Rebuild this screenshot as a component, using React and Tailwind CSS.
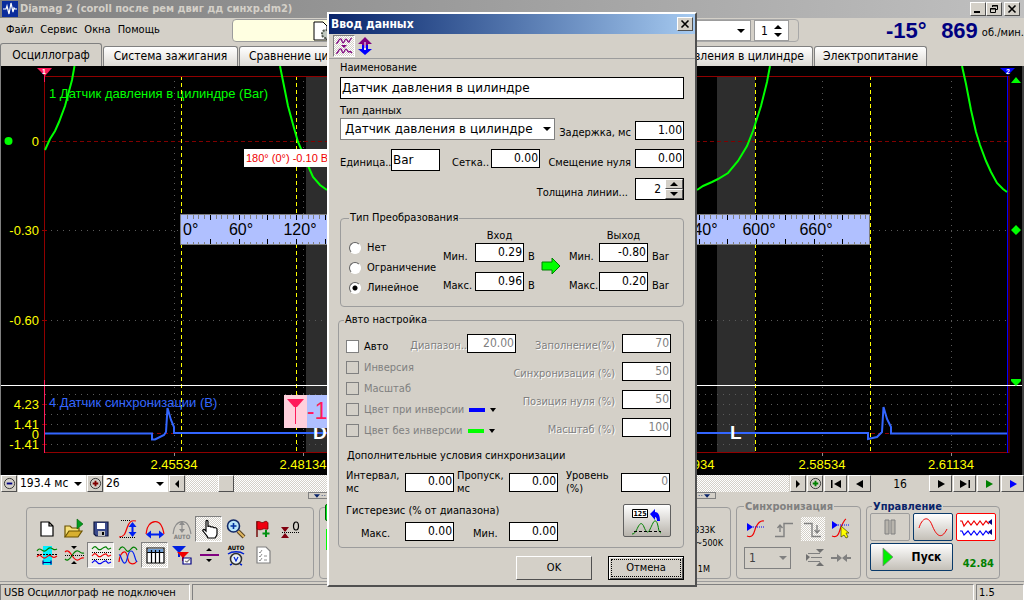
import React from "react";

const raised =
  "border border-t-white border-l-white border-r-[#505050] border-b-[#505050] bg-[#d4d0c8]";
const hatch =
  "bg-[repeating-conic-gradient(#ffffff_0_25%,#d4d0c8_0_50%)] bg-[length:2px_2px]";
const group = "rounded-[4px] border border-[#9c9c9c]";

function Icon({ children, className = "h-6 w-6" }) {
  return (
    <svg viewBox="0 0 24 24" className={className} fill="none" strokeWidth="1.2" aria-hidden="true">
      {children}
    </svg>
  );
}

const tools = [
  {
    name: "Новый",
    icon: <path d="M6 5h8l4 4v10H6zM14 5v4h4" fill="#fff" stroke="#000" />,
  },
  {
    name: "Открыть",
    icon: (
      <>
        <path d="M3 20V9h5l2 2h7v3" fill="#f6e07a" stroke="#6b5300" />
        <path d="M3 20l4-6h13l-4 6z" fill="#d8b030" stroke="#6b5300" />
        <path d="M15 2v10l6-5z" fill="#009a20" stroke="#006000" strokeWidth="0.6" />
      </>
    ),
  },
  {
    name: "Сохранить",
    icon: (
      <>
        <path d="M5 5h14v14H7l-2-2z" fill="#3a4a8c" stroke="#101840" />
        <path d="M8 6h8v6H8z" fill="#fff" />
        <path d="M9 14h7v5H9z" fill="#c0c0c0" />
        <path d="M13 15h2v3h-2z" fill="#000" />
      </>
    ),
  },
  {
    name: "Масштаб по вертикали",
    icon: (
      <>
        <path d="M3 20c5 0 6-3 8-9s4-8 9-7" stroke="#f00000" />
        <path d="M5 3.500h9M4 20.500h15" stroke="#000" strokeDasharray="1 1" />
        <path d="M16.500 8v9" stroke="#0020f0" strokeWidth="2" />
        <path d="M16.500 5l4 5h-8zM16.500 20l4-5h-8z" fill="#0020f0" />
      </>
    ),
  },
  {
    name: "Масштаб по горизонтали",
    icon: (
      <>
        <path d="M3 17c1-3 0-5 3-9s9-5 12 0 2 6 3 9" stroke="#f00000" />
        <path d="M6 17.500h12" stroke="#0020f0" strokeWidth="2" />
        <path d="M3 17.500l5-4v8zM21 17.500l-5-4v8z" fill="#0020f0" />
      </>
    ),
  },
  {
    name: "Автомасштаб",
    icon: (
      <>
        <path d="M3 17c1-3 0-5 3-9s9-5 12 0 2 6 3 9M12 7v7" stroke="#8c8c8c" />
        <path d="M12 4l3 4H9zM12 16l3-4H9z" fill="#8c8c8c" />
        <text x="12" y="22" textAnchor="middle" fontSize="6" fontWeight="bold" fill="#808080">AUTO</text>
      </>
    ),
  },
  {
    name: "Рука",
    pressed: true,
    icon: (
      <path
        d="M9 14V4.500c0-1.500 2-1.500 2 0V10c0-1.300 3-1.300 3 .5 0-1 3-1 3 .8 0-1 3-.8 3 1V17c0 2-1 2-2 4h-7c-1-3-3-4-5-7-1-1 1-2.200 2-1z"
        fill="#fff"
        stroke="#000"
      />
    ),
  },
  {
    name: "Лупа",
    icon: (
      <>
        <path d="M14 14l6 6" stroke="#5a4320" strokeWidth="4" />
        <path d="M14 14l6 6" stroke="#e0b860" strokeWidth="2" />
        <circle cx="9.500" cy="9" r="6" fill="#b8e4f8" stroke="#102868" strokeWidth="1.600" />
        <path d="M9.500 6v6M6.500 9h6" stroke="#0030a0" strokeWidth="1.600" />
      </>
    ),
  },
  {
    name: "Добавить маркер",
    icon: (
      <>
        <path d="M6 20V4" stroke="#700000" strokeWidth="1.400" />
        <path d="M6 5c3-2 4 2 7 0s4 1 4 1v6c-3 1-3-1-5 0s-4 1-6 0z" fill="#f00010" stroke="#700000" strokeWidth="0.800" />
        <path d="M15 13v7M11.500 16.500h7" stroke="#009010" strokeWidth="2" />
      </>
    ),
  },
  {
    name: "Нулевой уровень",
    icon: (
      <>
        <path d="M3 10h8l-4 5zM3 21h8l-4-5z" fill="#800010" />
        <path d="M4 15.500h18" stroke="#000" strokeDasharray="1 1" />
        <ellipse cx="18" cy="9" rx="2.500" ry="4" stroke="#000" />
      </>
    ),
  },
  {
    name: "Выделение",
    icon: (
      <>
        <path d="M8 3h9v19H8z" fill="#00f0ff" />
        <path d="M2 8c3-5 5 1 8 0s3-4 6-3 3 3 6 1" stroke="#008000" />
        <path d="M2 11.500h20" stroke="#000" strokeDasharray="2 1" />
        <path d="M2 14c3-5 5 2 8 1s3-4 6-2 3 2 6 0" stroke="#f00000" />
        <path d="M8 19.500h8M8 17.500v4M16 17.500v4" stroke="#000080" />
      </>
    ),
  },
  {
    name: "Пересечение",
    icon: (
      <>
        <path d="M9 3h6l-3 3zM9 21h6l-3-3z" fill="#000" />
        <path d="M3 9c2-2 4-1 6 2s4 7 7 6 3-3 6-2" stroke="#f00000" />
        <path d="M3 16c2 2 4 1 6-2s4-7 7-6 3 3 6 2" stroke="#008000" />
        <path d="M3 12.500h19" stroke="#000" strokeDasharray="1 1" />
      </>
    ),
  },
  {
    name: "Раздельно",
    active: true,
    icon: (
      <>
        <path d="M3 6c3-4 4-2 6 0s3 0 5-1 3-2 4 0 2 1 4 0" stroke="#008000" />
        <path d="M3 13c3-4 4-2 6 0s3 0 5-1 3-2 4 0 2 1 4 0" stroke="#f00000" />
        <path d="M3 20c3-4 4-2 6 0s3 0 5-1 3-2 4 0 2 1 4 0" stroke="#0000f0" />
        <path d="M3 9.500h19M3 16.500h19" stroke="#000" strokeDasharray="1 1" />
      </>
    ),
  },
  {
    name: "Наложение",
    icon: (
      <>
        <path d="M3 7c3-5 5-3 7 0s4 0 6-2 4 0 5 2" stroke="#008000" />
        <path d="M3 19c0-5 3-11 6-10s2 9 5 11 5 1 7-2" stroke="#f00000" />
        <path d="M3 12c2-1 3 9 6 8s2-12 6-12 3 8 6 11" stroke="#0020f0" />
      </>
    ),
  },
  {
    name: "Таблица",
    pressed: true,
    icon: (
      <>
        <path d="M4 5h17v15H4z" fill="#fff" stroke="#000" />
        <path d="M5 6h15v3H5z" fill="#70a0d8" />
        <path d="M4 9.500h17M8.500 7v13M12.500 7v13M16.500 7v13" stroke="#000" />
      </>
    ),
  },
  {
    name: "Список маркеров",
    icon: (
      <>
        <path d="M2 3h14l-6 6v5H8V9z" fill="#0020e0" />
        <path d="M7 9h12l-5 5v4h-2v-4z" fill="#f00000" />
        <path d="M13 15h8v6h-8z" fill="#fff" stroke="#000080" />
        <path d="M15 18l2 1 3-3" stroke="#808080" />
      </>
    ),
  },
  {
    name: "Линия",
    icon: (
      <>
        <path d="M3 12h19" stroke="#800080" strokeWidth="2" />
        <path d="M12 5l3 3H9zM12 19l3-3H9z" fill="#000" />
      </>
    ),
  },
  {
    name: "Автозапуск",
    icon: (
      <>
        <text x="12" y="7" textAnchor="middle" fontSize="6" fontWeight="bold" fill="#000">AUTO</text>
        <path d="M4 11c4-3 12-3 16 0M8 21l-2 1M16 21l2 1" stroke="#0020d0" strokeWidth="1.500" />
        <circle cx="12" cy="16" r="5.500" fill="#e8f0f4" stroke="#303030" strokeWidth="1.500" />
        <path d="M10 14l2 4 2-4" stroke="#0020d0" />
      </>
    ),
  },
  {
    name: "Отчёт",
    icon: (
      <>
        <path d="M6 4h9l4 4v12H6z" fill="#fff" stroke="#808080" />
        <path d="M8 9l1 1 2-3M8 13l1 1 2-3M8 17l1 1 2-3M13 13h3M13 17h3" stroke="#909090" strokeWidth="1" />
      </>
    ),
  },
];

function ToolButton({ tool }) {
  const look = tool.pressed
    ? `border border-t-[#808080] border-l-[#808080] border-r-white border-b-white ${hatch}`
    : tool.active
      ? "border border-t-[#808080] border-l-[#808080] border-r-white border-b-white bg-[#efedea]"
      : "";
  return (
    <button aria-label={tool.name} className={`flex h-[26px] w-[27px] items-center justify-center ${look}`}>
      <Icon>{tool.icon}</Icon>
    </button>
  );
}

function TitleBar() {
  return (
    <header className="flex h-[18px] items-center bg-linear-to-r from-[#808080] to-[#c0c0c0] pr-1 pl-[2px]">
      <svg viewBox="0 0 16 16" className="h-4 w-4" aria-hidden="true">
        <path d="M0 0h16v16H0z" fill="#0a2c9c" />
        <path d="M1 8h3l1-3 2 8 2-11 2 9 1-4 1 1h2" fill="none" stroke="#fff" strokeWidth="1.200" />
      </svg>
      <h1 className="ml-[2px] flex-1 text-[11px] leading-4 font-bold text-[#d4d0c8]">
        Diamag 2 (coroll после рем двиг дд синхр.dm2)
      </h1>
      <div className="flex">
        <button aria-label="Свернуть" className={`flex h-[14px] w-4 items-center justify-center ${raised}`}>
          <svg viewBox="0 0 10 10" className="h-[10px] w-[10px]"><path d="M1 7h6v2H1z" /></svg>
        </button>
        <button aria-label="Восстановить" className={`flex h-[14px] w-4 items-center justify-center ${raised}`}>
          <svg viewBox="0 0 10 10" className="h-[10px] w-[10px]" fill="none" stroke="#000">
            <path d="M3.500 3V1.500h5v4H7M3 2h6M1.500 4.500h5v4h-5zM1 5h6" />
          </svg>
        </button>
        <button aria-label="Закрыть" className={`ml-[2px] flex h-[14px] w-4 items-center justify-center ${raised}`}>
          <svg viewBox="0 0 10 10" className="h-[10px] w-[10px]" stroke="#000" strokeWidth="1.600"><path d="M1.500 1.500l7 7M8.500 1.500l-7 7" /></svg>
        </button>
      </div>
    </header>
  );
}

function MenuBar() {
  return (
    <div className="flex h-[25px] items-center">
      <nav className="flex w-[232px] gap-[7px] pl-[6px] text-[11px]">
        <a href="#file">Файл</a>
        <a href="#service">Сервис</a>
        <a href="#windows">Окна</a>
        <a href="#help">Помощь</a>
      </nav>
      <div className="flex h-[23px] w-[200px] items-center rounded-[4px] border border-[#9c9c9c] bg-[#ffffe1] pl-20">
        <svg viewBox="0 0 18 20" className="h-5 w-[18px]" aria-hidden="true">
          <path d="M1 1h9l4 4v14H1z" fill="#fff" stroke="#000" />
          <circle cx="13" cy="13" r="4" fill="#c0c8c0" stroke="#505850" strokeWidth="2" strokeDasharray="2 1" />
        </svg>
      </div>
      <div className="ml-auto flex h-[23px] w-[230px] items-center justify-end gap-[3px] rounded-[4px] border border-[#a8a8a8] pr-[9px]">
        <div className="flex h-[21px] w-36 items-center justify-end border border-[#9c9c9c] bg-white pr-[5px]">
          <svg viewBox="0 0 8 4" className="h-1 w-2" aria-hidden="true"><path d="M0 0h8L4 4z" /></svg>
        </div>
        <div className="flex h-[21px] w-[35px] items-center justify-between border border-[#9c9c9c] bg-white px-[6px] text-[12px]">
          <span>1</span>
          <svg viewBox="0 0 8 14" className="h-[14px] w-2" aria-hidden="true"><path d="M0 5h8L4 1zM0 9h8l-4 4z" /></svg>
        </div>
      </div>
      <div className="ml-[87px] flex w-[138px] items-center font-['Liberation_Sans',sans-serif] text-[22px] leading-6 font-bold text-[#000080]">
        <span>-15°</span>
        <span className="ml-auto">869</span>
        <span className="ml-1 pt-1 font-['DejaVu_Sans_Condensed','DejaVu_Sans',sans-serif] text-[11px] leading-4 font-normal text-black">об./мин.</span>
      </div>
    </div>
  );
}

function Tabs() {
  const tab =
    "h-5 shrink-0 overflow-hidden rounded-t-[3px] border border-b-0 border-[#808080] bg-linear-to-b from-white to-[#dedbd5] whitespace-nowrap";
  return (
    <div role="tablist" className="flex h-[23px] items-end gap-px text-[12px] leading-[19px]">
      <button role="tab" aria-selected="true" className="h-[23px] w-[102px] rounded-t-[3px] border border-b-0 border-[#808080] bg-[#d4d0c8] leading-[21px]">
        Осциллограф
      </button>
      <button role="tab" className={`${tab} w-[135px]`}>Система зажигания</button>
      <button role="tab" className={`${tab} w-[333px] pl-[9px] text-left`}>Сравнение цилиндров</button>
      <button role="tab" className={`${tab} w-[240px] pr-2 text-right`}>Осциллограмма давления в цилиндре</button>
      <button role="tab" className={`${tab} w-[113px]`}>Электропитание</button>
    </div>
  );
}

const rulerMarks = Array.from({ length: 119 }, (_, i) => i + 1);

function Chart() {
  return (
    <svg viewBox="0 66 1024 409" className="block h-auto w-full font-['Liberation_Sans',sans-serif]" fill="none">
      <path d="M0 66h1024v409H0z" fill="#000" />
      <path d="M306 77h44v375h-44zM717 77h38v375h-38z" fill="#2d2d2d" />

      {/* grid */}
      <g stroke="#5a5a5a" strokeDasharray="1 5">
        <path d="M174.500 81V452M303.500 81V452M822.500 81V452M951.500 81V452" />
        <path d="M45 230.500H1007M45 320.500H1007" />
        <path d="M45 394.500H1007M45 404.500H1007M45 414.500H1007M45 424.500H1007M45 444.500H1007" />
      </g>
      <path d="M45 141.500H1007" stroke="#800000" strokeDasharray="4 3" />
      <path d="M181.500 76V452M296.500 76V452M755.500 76V452M870.500 76V452" stroke="#ffff00" strokeDasharray="4 3" />
      <path d="M44.500 76.500H1009M44 452.500H1009M1009 76V453M44.500 76V385M42 141.500h5M42 230.500h5M42 320.500h5M42 404.500h5M42 424.500h5M42 444.500h5" stroke="#900000" />
      <path d="M44.500 68v14M44.500 380v73" stroke="#ff1a5a" />
      <path d="M174.500 453v3M303.500 453v3M822.500 453v3M951.500 453v3" stroke="#909090" />
      <path d="M1007.500 76V453" stroke="#0000ff" />
      <path d="M0 385.500H1022" stroke="#fff" />

      {/* pressure trace */}
      <g stroke="#00ff00" strokeWidth="2">
        <path d="M74.500 66L72 80L65 106L59 122L55 131L50 139L45 150" />
        <path d="M280 66L284 86L288 106L294 128L298 142L302 151L309 168L313 177L320 185L327 190" />
        <path d="M697 190L703 186L712 182L718 179L728 173L738 161L747 146L753 131L761 106L767 82L770 66" />
        <path d="M962 66L966 84L971 110L976 132L980 145L986 161L991 172L997 183L1003 189L1007 192" />
      </g>

      {/* sync trace */}
      <path d="M45 433.500H1007" stroke="#900000" strokeDasharray="4 3" />
      <path
        d="M45 433.500H152V439.500H155L164 435L166 432L167.500 408L171 420L174 427V433H868V439L877 437L882 432L883.500 407L887 419L891 427V433.500H1007"
        stroke="#3366ff"
        strokeWidth="2"
      />

      <g fill="#fff" fontSize="19" fontWeight="bold">
        <text x="313" y="439">D</text>
        <text x="730" y="439">L</text>
      </g>

      {/* angle ruler */}
      <path d="M180.500 214.500H869.500V244.500H180.500z" fill="#b0c0ff" stroke="#808080" />
      {rulerMarks.map((i) => {
        const x = Math.round(181 + i * 5.75) + 0.5;
        const major = i % 5 === 0;
        return (
          <path
            key={i}
            d={major ? `M${x} 215v5M${x} 239v5` : `M${x} 215v4M${x} 242v2`}
            stroke={major ? "#000" : "#808080"}
          />
        );
      })}
      <g fill="#000" fontSize="16">
        <text x="183" y="235">0°</text>
        <text x="241" y="235" textAnchor="middle">60°</text>
        <text x="300" y="235" textAnchor="middle">120°</text>
        <text x="701" y="235" textAnchor="middle">540°</text>
        <text x="759" y="235" textAnchor="middle">600°</text>
        <text x="816" y="235" textAnchor="middle">660°</text>
      </g>

      <path d="M244 149h90v18h-90z" fill="#fff" />
      <text x="246" y="162" fontSize="11" fill="#f00000">180° (0°) -0.10 B</text>

      <path d="M284 395h23v33h-23z" fill="#ffd0dc" />
      <path d="M307 395h40v33h-40z" fill="#b0c0ff" />
      <path d="M287 399h17l-7 8h-3z" fill="#ff1a5a" />
      <path d="M295.500 405v19" stroke="#ff1a5a" />
      <text x="307" y="419" fontSize="23" fill="#ff1a5a">-1</text>

      <g fill="#ffff00" fontSize="13">
        <g textAnchor="end">
          <text x="39" y="146">0</text>
          <text x="39" y="235">-0.30</text>
          <text x="39" y="325">-0.60</text>
          <text x="39" y="409">4.23</text>
          <text x="39" y="429">1.41</text>
          <text x="39" y="439">0</text>
          <text x="39" y="449">-1.41</text>
        </g>
        <g textAnchor="middle">
          <text x="174" y="469">2.45534</text>
          <text x="303" y="469">2.48134</text>
          <text x="691" y="469">2.55934</text>
          <text x="822" y="469">2.58534</text>
          <text x="951" y="469">2.61134</text>
        </g>
      </g>
      <text x="49" y="98" fontSize="13" fill="#00ff00">1 Датчик давления в цилиндре (Bar)</text>
      <text x="49" y="407" fontSize="13" fill="#3366ff">4 Датчик синхронизации (В)</text>

      {/* markers */}
      <path d="M37 68h15l-7 8z" fill="#ff1a5a" />
      <path d="M1000 68h15l-7 7z" fill="#0000ff" />
      <g fill="#fff" fontSize="7" fontWeight="bold">
        <text x="42" y="74">1</text>
        <text x="1006" y="74">2</text>
      </g>
      <circle cx="8.500" cy="141" r="4" fill="#00ff00" />
      <path d="M1011 83h10l-5-6zM1016 225l5 5-5 5-5-5zM1011 379h10v2l-5 5-5-5z" fill="#00ff00" />
      <path d="M0.500 66V475M1023 66V475" stroke="#808080" />
    </svg>
  );
}

function ZoomSign({ color, plus, label }) {
  return (
    <button aria-label={label} className={`flex h-[17px] w-4 shrink-0 items-center justify-center ${raised}`}>
      <svg viewBox="0 0 14 14" className="h-[13px] w-[13px]" fill="none">
        <circle cx="7" cy="7" r="5.500" stroke="#303030" />
        <path d={plus ? "M4 7h6M7 4v6" : "M4 7h6"} stroke={color} strokeWidth="2" />
      </svg>
    </button>
  );
}

function NavButton({ label, d, color = "#000", wide = true }) {
  return (
    <button
      aria-label={label}
      className={`flex h-[17px] shrink-0 items-center justify-center ${raised} ${wide ? "w-[23px]" : "w-4"}`}
    >
      <svg viewBox="0 0 12 10" className="h-[10px] w-3" fill={color}>
        <path d={d} />
      </svg>
    </button>
  );
}

function Arrow({ gray }) {
  return (
    <svg viewBox="0 0 8 4" className="pointer-events-none absolute top-1/2 right-1 h-1 w-2 -translate-y-1/2" aria-hidden="true">
      <path d="M0 0h8L4 4z" fill={gray ? "#808080" : "#000"} />
    </svg>
  );
}

function ScrollRow() {
  const select = "block h-[17px] w-full appearance-none bg-white text-[12px] leading-[17px]";
  return (
    <div className="flex h-[17px] items-center gap-px pl-px">
      <ZoomSign label="Уменьшить" color="#000080" />
      <label className="relative w-[68px]">
        <select aria-label="Длительность" className={`${select} pl-[2px]`}>
          <option>193.4 мс</option>
        </select>
        <Arrow />
      </label>
      <ZoomSign label="Увеличить" color="#800000" plus />
      <label className="relative w-16">
        <select aria-label="Деление" className={`${select} pl-[2px]`}>
          <option>26</option>
        </select>
        <Arrow />
      </label>
      <NavButton label="Прокрутка влево" wide={false} d="M8 1v8L4 5z" />
      <div className={`flex h-[17px] flex-1 ${hatch}`}>
        <div className={`ml-8 h-[17px] w-4 ${raised}`} />
      </div>
      <NavButton label="Прокрутка вправо" wide={false} d="M4 1v8l4-4z" />
      <ZoomSign label="Приблизить" color="#008000" plus />
      <NavButton label="В начало" d="M1 1h1.500v8H1zM11 1v8L4 5z" />
      <NavButton label="Назад" d="M9 1v8L2 5z" />
      <output className="w-[56px] text-center text-[12px]">16</output>
      <NavButton label="Вперёд" d="M3 1v8l7-4z" />
      <NavButton label="В конец" d="M1 1v8l7-4zM9.500 1H11v8H9.500z" />
      <NavButton label="Пуск" d="M3 1v8l7-4z" color="#008000" />
      <NavButton label="Пуск вперёд" d="M3 1v8l7-4z" color="#0000ff" />
    </div>
  );
}

function Splitter() {
  return (
    <div className="mx-[308px] flex h-2 justify-between">
      {["left", "right"].map((side) => (
        <div key={side} className="flex h-[7px] w-6 items-center border border-[#808080] px-1">
          <svg viewBox="0 0 16 4" className={side === "left" ? "h-1 w-4" : "h-1 w-4 -scale-x-100"} aria-hidden="true">
            <path d="M1 0h7L4.500 4zM10 1h1v1h-1zM13 1h1v1h-1z" fill="#0a246a" />
          </svg>
        </div>
      ))}
    </div>
  );
}

function SyncPanel() {
  return (
    <fieldset className={`${group} -mt-[7px] h-[79px] w-[125px] shrink-0 px-[7px]`}>
      <legend className="h-[13px] px-px text-[11px] leading-[13px] font-bold text-[#808080]">Синхронизация</legend>
      <div className="grid grid-cols-4 gap-x-[4px] pt-1">
        <button aria-label="Уровень">
          <Icon>
            <path d="M3 19c7 3 7-5 9-9s4-7 8-6" stroke="#f00000" />
            <path d="M3 6l6 4-6 4z" fill="#0000ff" />
            <path d="M9 10h11" stroke="#0000ff" strokeDasharray="1 1" />
          </Icon>
        </button>
        <button aria-label="Фронт">
          <Icon><path d="M3 19.500h9V6.500h9M8 9v6M5.500 11L8 8l2.500 3" stroke="#808080" strokeWidth="1.400" /></Icon>
        </button>
        <button aria-label="Спад" className={hatch}>
          <Icon><path d="M3 6.500h8v13h9M16 8v8M13.500 13L16 16l2.500-3" stroke="#808080" strokeWidth="1.400" /></Icon>
        </button>
        <button aria-label="Ручная">
          <Icon>
            <path d="M3 19c7 3 7-5 9-9s3-7 5-8" stroke="#f00000" />
            <path d="M3 4l6 4-6 4z" fill="#0000ff" />
            <path d="M9 8h12" stroke="#0000ff" strokeDasharray="1 1" />
            <path d="M12 9v11l3-2 2 3 2-1-2-4h3z" fill="#ffff00" stroke="#404000" strokeWidth="0.700" />
          </Icon>
        </button>
      </div>
      <div className="flex items-center pt-[5px]">
        <label className="relative w-[47px]">
          <select aria-label="Канал" disabled className="block h-[22px] w-full appearance-none border border-[#808080] pl-1 text-[12px] text-[#404040]">
            <option>1</option>
          </select>
          <Arrow gray />
        </label>
        <button aria-label="Гистерезис" className="ml-3">
          <Icon>
            <path d="M3 8l4 3-4 4zM13 3h8l-4 4zM13 20h8l-4-4z" fill="#707070" />
            <path d="M5 7.500h12M8 11.500h11M5 15.500h12" stroke="#808080" />
          </Icon>
        </button>
        <button aria-label="Сжать" className="ml-[2px]">
          <Icon>
            <path d="M2 11h6V8l5 4-5 4v-3H2zM22 11h-4V8l-5 4 5 4v-3h4z" fill="#808080" />
          </Icon>
        </button>
      </div>
    </fieldset>
  );
}

function ControlPanel() {
  const btn = "flex items-center justify-center rounded-[2px] border bg-linear-to-b from-white to-[#c4c0b8]";
  return (
    <fieldset className={`${group} -mt-[7px] h-[79px] w-[134px] shrink-0 px-[3px]`}>
      <legend className="ml-[2px] h-[13px] px-px text-[11px] leading-[13px] font-bold text-[#0a246a]">Управление</legend>
      <div className="flex justify-between">
        <button aria-label="Пауза" className="flex h-7 w-10 items-center justify-center rounded-[2px] border border-[#9c9c9c]">
          <svg viewBox="0 0 12 16" className="h-4 w-3" fill="#b8b4ac" stroke="#808080"><path d="M1 1h4v14H1zM7 1h4v14H7z" /></svg>
        </button>
        <button aria-label="Синус" className={`${btn} h-7 w-10 border-[#0a3a6a]`}>
          <svg viewBox="0 0 30 20" className="h-5 w-[30px]" fill="none" stroke="#f00000"><path d="M1 11C4 1 10-2 14 8s9 16 15 4" /></svg>
        </button>
        <button aria-label="Непрерывно" className="flex h-7 w-10 items-center justify-center rounded-[2px] border border-[#ff0000] bg-white">
          <svg viewBox="0 0 34 20" className="h-5 w-[34px]" fill="none" strokeWidth="1.200">
            <path d="M1 4h2l2 5 4-5 3 4 3-4 3 4 3-4 3 4 3-4 3 3" stroke="#f00000" />
            <path d="M1 14h2l2 4 4-4 3 4 3-4 3 4 3-4 3 4 3-4 3 3" stroke="#0000ff" />
            <path d="M33 2v6l-4-3zM33 12v6l-4-3z" fill="#000080" />
          </svg>
        </button>
      </div>
      <div className="flex items-end justify-between pt-[2px]">
        <button className={`${btn} h-7 w-[83px] gap-[18px] border-[#0a3a6a] text-[12px] font-bold`}>
          <svg viewBox="0 0 12 20" className="h-5 w-3" aria-hidden="true"><path d="M1 1v18l10-9z" fill="#00f000" stroke="#808080" strokeWidth="0.800" /></svg>
          Пуск
        </button>
        <output className="pr-[2px] text-[11px] leading-[14px] font-bold text-[#008000]">42.84</output>
      </div>
    </fieldset>
  );
}

function BottomPanels() {
  return (
    <div className="flex gap-[5px] border-b border-[#9c9c9c] pt-[7px] pr-6 pb-[2px] pl-[26px]">
      <div className={`${group} h-[72px] w-[288px] shrink-0 pt-2 pl-[6px]`}>
        <div className="flex">{tools.slice(0, 10).map((t) => <ToolButton key={t.name} tool={t} />)}</div>
        <div className="flex">{tools.slice(10).map((t) => <ToolButton key={t.name} tool={t} />)}</div>
      </div>
      <div className={`${group} flex h-[72px] flex-1 justify-between pr-[7px] pl-[5px]`}>
        <div>
          <div className="-mt-1 h-[17px] w-4 rounded-[2px] border border-[#006000] bg-[#00e820]" />
          <div className="mt-2 ml-px h-[21px] w-px bg-[#00ff00]" />
        </div>
        <div className="flex flex-col items-end pt-4 text-[9px] leading-[13px]">
          <span className="pr-2">333K</span>
          <span>~500K</span>
          <span className="pt-[13px] pr-[13px]">1M</span>
        </div>
      </div>
      <SyncPanel />
      <ControlPanel />
    </div>
  );
}

function StatusBar() {
  const cell = "h-[17px] border border-t-[#808080] border-l-[#808080] border-r-white border-b-white";
  return (
    <footer className="flex gap-[2px] pt-[2px] text-[11px] leading-[15px]">
      <div className={`${cell} w-[190px] pl-[3px]`}>USB Осциллограф не подключен</div>
      <div className={`${cell} flex-1`} />
      <div className={`${cell} w-12 pl-[2px]`}>1.5</div>
    </footer>
  );
}

function Num({ id, value, disabled, label }) {
  return (
    <input
      id={id}
      aria-label={label}
      defaultValue={value}
      disabled={disabled}
      className="h-[19px] w-[49px] shrink-0 border border-black bg-white pr-px pb-[2px] text-right text-[12px] disabled:text-[#808080]"
    />
  );
}

function Check({ id, label, disabled, color }) {
  return (
    <div className="flex h-[21px] items-center gap-[5px]">
      <input
        id={id}
        type="checkbox"
        disabled={disabled}
        className="h-[13px] w-[13px] shrink-0 appearance-none border border-[#808080] bg-white disabled:bg-transparent"
      />
      <label htmlFor={id} className={`whitespace-nowrap ${disabled ? "text-[#808080]" : ""}`}>{label}</label>
      {color && (
        <button type="button" aria-label={`${label}: выбор`}>
          <svg viewBox="0 0 28 6" className="h-[6px] w-7">
            <path d="M0 1h16v4H0z" fill={color} />
            <path d="M21 1h6l-3 4z" fill="#000" />
          </svg>
        </button>
      )}
    </div>
  );
}

function ConversionGroup() {
  return (
    <fieldset className={`${group} mt-[11px] h-[96px] px-2`}>
      <legend className="h-[14px] px-px leading-[14px]">Тип Преобразования</legend>
      <div className="flex items-start">
        <div className="flex w-[94px] flex-col pt-[13px]">
          {["Нет", "Ограничение", "Линейное"].map((name) => (
            <label key={name} className="flex h-5 items-center gap-[6px]">
              <input
                type="radio"
                name="conversion"
                defaultChecked={name === "Линейное"}
                className="h-3 w-3 shrink-0 appearance-none rounded-full border border-t-[#606060] border-r-white border-b-white border-l-[#606060] bg-white checked:bg-[radial-gradient(circle,#000_2px,#fff_3px)]"
              />
              {name}
            </label>
          ))}
        </div>
        <div className="grid grid-cols-[32px_49px_17px] grid-rows-[14px_29px_29px] items-start pt-1">
          <span className="col-start-2 text-center">Вход</span>
          <label htmlFor="in-min" className="col-start-1 pt-[7px]">Мин.</label>
          <Num id="in-min" value="0.29" />
          <span className="pt-[7px] pl-1">В</span>
          <label htmlFor="in-max" className="pt-[7px]">Макс.</label>
          <Num id="in-max" value="0.96" />
          <span className="pt-[7px] pl-1">В</span>
        </div>
        <svg viewBox="0 0 20 18" className="mt-8 h-[18px] w-5" aria-hidden="true">
          <path d="M1 5h10V1l8 8-8 8v-4H1z" fill="#00ff00" stroke="#008000" />
        </svg>
        <div className="ml-2 grid grid-cols-[30px_49px_24px] grid-rows-[14px_29px_29px] items-start pt-1">
          <span className="col-start-2 text-center">Выход</span>
          <label htmlFor="out-min" className="col-start-1 pt-[7px]">Мин.</label>
          <Num id="out-min" value="-0.80" />
          <span className="pt-[7px] pl-1">Bar</span>
          <label htmlFor="out-max" className="pt-[7px]">Макс.</label>
          <Num id="out-max" value="0.20" />
          <span className="pt-[7px] pl-1">Bar</span>
        </div>
      </div>
    </fieldset>
  );
}

const autoFields = [
  { id: "fill", label: "Заполнение(%)", value: "70" },
  { id: "sync", label: "Синхронизация (%)", value: "50" },
  { id: "zero-pos", label: "Позиция нуля (%)", value: "50" },
  { id: "scale", label: "Масштаб (%)", value: "100" },
];

function AutoGroup() {
  const gray = "text-[#808080] [text-shadow:1px_1px_0_#fff]";
  return (
    <fieldset className={`${group} -ml-[2px] mt-[6px] h-[235px] min-w-0 pr-3 pl-[7px]`}>
      <legend className="-ml-[2px] h-[14px] px-px leading-[14px]">Авто настройка</legend>
      <div className="flex justify-between pt-[6px]">
        <div className="w-[170px] shrink-0">
          <div className="flex h-6 items-start justify-between pt-px">
            <div className="self-end">
              <Check id="auto" label="Авто" />
            </div>
            <div className="flex items-end">
              <label htmlFor="range" className={gray}>Диапазон..</label>
              <Num id="range" value="20.00" disabled />
            </div>
          </div>
          <Check id="invert" label="Инверсия" disabled />
          <Check id="zoom" label="Масштаб" disabled />
          <Check id="color-inv" label="Цвет при инверсии" disabled color="#0000ff" />
          <Check id="color-norm" label="Цвет без инверсии" disabled color="#00ff00" />
        </div>
        <div className="flex w-[155px] flex-col gap-[9px] pt-px">
          {autoFields.map((f) => (
            <div key={f.id} className="flex items-end justify-end gap-[7px]">
              <label htmlFor={f.id} className={`whitespace-nowrap ${gray}`}>{f.label}</label>
              <Num id={f.id} value={f.value} disabled />
            </div>
          ))}
        </div>
      </div>
      <p className="pt-2 pl-px">Дополнительные условия синхронизации</p>
      <div className="grid grid-cols-[59px_52px_52px_57px_55px_49px] items-center pt-[6px] leading-[13px]">
        <label htmlFor="interval">Интервал,<br />мс</label>
        <Num id="interval" value="0.00" />
        <label htmlFor="skip">Пропуск,<br />мс</label>
        <Num id="skip" value="0.00" />
        <label htmlFor="level">Уровень<br />(%)</label>
        <Num id="level" value="0" disabled />
      </div>
      <div className="flex justify-between pt-[9px]">
        <div>
          <p className="h-[18px]">Гистерезис (% от диапазона)</p>
          <div className="grid grid-cols-[59px_52px_52px_49px] items-center">
            <label htmlFor="hyst-max" className="pt-1 pl-[15px]">Макс.</label>
            <Num id="hyst-max" value="0.00" />
            <label htmlFor="hyst-min" className="pt-1 pl-4">Мин.</label>
            <Num id="hyst-min" value="0.00" />
          </div>
        </div>
        <button type="button" aria-label="Рассчитать" className="flex h-[33px] w-[48px] items-center justify-center rounded-[2px] border border-[#606060] bg-linear-to-b from-white to-[#b8b4ac]">
          <svg viewBox="0 0 32 28" className="h-7 w-8" fill="none">
            <path d="M1.500 2.500h15v8h-15z" fill="#fff" stroke="#000" />
            <text x="9" y="9" textAnchor="middle" fontSize="7" fontWeight="bold" fill="#000">125</text>
            <path d="M19 7l5-5v3c3 0 5 3 5 9h-3c0-3-1-4-2-4v3z" fill="#0000ff" />
            <path d="M1 27c3 0 4-3 6-7s4-5 6 0 3 5 4 5 3-5 5-9 4-2 5 3 1 6 3 7" stroke="#008000" />
            <path d="M3 24.500h27" stroke="#000" strokeDasharray="3 2" />
          </svg>
        </button>
      </div>
    </fieldset>
  );
}

function DataDialog() {
  return (
    <div
      role="dialog"
      aria-label="Ввод данных"
      className="flex w-[370px] flex-col border-2 border-t-white border-r-[#505050] border-b-[#505050] border-l-white bg-[#d4d0c8] text-[11px] leading-[14px]"
    >
      <div className="flex h-5 items-center justify-between bg-linear-to-r from-[#0a246a] to-[#a6caf0] pr-[2px] pl-[2px]">
        <h2 className="text-[12px] font-bold text-white">Ввод данных</h2>
        <button aria-label="Закрыть окно" className={`flex h-[14px] w-4 items-center justify-center ${raised}`}>
          <svg viewBox="0 0 10 10" className="h-[10px] w-[10px]" stroke="#000" strokeWidth="1.600"><path d="M1.500 1.500l7 7M8.500 1.500l-7 7" /></svg>
        </button>
      </div>
      <div className="flex h-[25px] items-center gap-[2px] border-b border-[#9c9c9c] pl-1">
        <button aria-label="Кривые" className={`flex h-[22px] w-[22px] items-center justify-center border border-t-[#808080] border-l-[#808080] border-r-white border-b-white ${hatch}`}>
          <svg viewBox="0 0 18 18" className="h-[18px] w-[18px]" fill="none" stroke="#800080" strokeWidth="1.200">
            <path d="M1 6c2 1 2-3 4-4s2 4 3 4 2-4 3-4 2 4 3 3 1-4 3-4M1 16c2 1 2-3 4-4s2 4 3 4 2-4 3-4 2 4 3 3 1-1 3 1" />
            <path d="M6 8h6l-3 3z" fill="#800080" stroke="none" />
          </svg>
        </button>
        <button aria-label="Вверх и вниз">
          <svg viewBox="0 0 16 20" className="h-5 w-4">
            <path d="M8 1l7 7h-4v4H5V8H1z" fill="#800080" />
            <path d="M8 19l7-6h-4v-4H9v5H7v-5H5v4H1z" fill="#0000ff" />
            <path d="M8 6v8" stroke="#fff" />
          </svg>
        </button>
      </div>

      <form className="flex flex-col px-[11px] pt-[2px] pb-[5px]">
        <label htmlFor="name" className="h-4">Наименование</label>
        <input id="name" defaultValue="Датчик давления в цилиндре" className="h-[22px] border border-black bg-white pl-px font-['DejaVu_Sans',sans-serif] text-[12px]" />
        <label htmlFor="kind" className="mt-[5px] h-[14px]">Тип данных</label>
        <div className="flex items-end">
          <span className="relative w-[215px]">
            <select id="kind" className="block h-[22px] w-full appearance-none border border-[#808080] bg-white pl-1 font-['DejaVu_Sans',sans-serif] text-[12px]">
              <option>Датчик давления в цилиндре</option>
            </select>
            <Arrow />
          </span>
          <label htmlFor="delay" className="mr-1 ml-auto">Задержка, мс</label>
          <Num id="delay" value="1.00" />
        </div>
        <div className="mt-[9px] flex items-start">
          <label htmlFor="unit" className="w-[51px] pt-[7px]">Единица..</label>
          <input id="unit" defaultValue="Bar" className="h-[22px] w-[49px] border border-black bg-white pl-px font-['DejaVu_Sans',sans-serif] text-[12px]" />
          <label htmlFor="grid" className="ml-3 w-[39px] pt-[7px]">Сетка..</label>
          <Num id="grid" value="0.00" />
          <label htmlFor="offset" className="mr-1 ml-auto pt-[7px]">Смещение нуля</label>
          <Num id="offset" value="0.00" />
        </div>
        <div className="mt-[7px] flex items-end justify-end gap-[7px]">
          <label htmlFor="thick">Толщина линии...</label>
          <div className="flex h-[22px] w-[49px] border border-black bg-white">
            <input id="thick" defaultValue="2" className="w-[29px] pr-1 text-right text-[12px]" />
            <div className="flex flex-1 flex-col">
              <button type="button" aria-label="Больше" className={`flex flex-1 items-center justify-center ${raised}`}>
                <svg viewBox="0 0 8 4" className="h-1 w-2"><path d="M0 4h8L4 0z" /></svg>
              </button>
              <button type="button" aria-label="Меньше" className={`flex flex-1 items-center justify-center ${raised}`}>
                <svg viewBox="0 0 8 4" className="h-1 w-2"><path d="M0 0h8L4 4z" /></svg>
              </button>
            </div>
          </div>
        </div>
        <ConversionGroup />
        <AutoGroup />
        <div className="mt-2 flex justify-end gap-4">
          <button type="button" className={`h-6 w-[76px] ${raised}`}>OK</button>
          <button type="button" className="h-6 w-[76px] border border-black p-[2px] shadow-[inset_1px_1px_0_#fff,inset_-1px_-1px_0_#505050]">
            <span className="flex h-full items-center justify-center border border-dotted border-black">Отмена</span>
          </button>
        </div>
      </form>
    </div>
  );
}

export default function App() {
  return (
    <div className="relative min-h-screen overflow-hidden bg-[#d4d0c8] font-['DejaVu_Sans_Condensed','DejaVu_Sans',sans-serif] text-black">
      <TitleBar />
      <MenuBar />
      <Tabs />
      <Chart />
      <ScrollRow />
      <Splitter />
      <BottomPanels />
      <StatusBar />
      <div className="absolute inset-x-0 top-0 flex justify-center pt-3">
        <DataDialog />
      </div>
    </div>
  );
}
